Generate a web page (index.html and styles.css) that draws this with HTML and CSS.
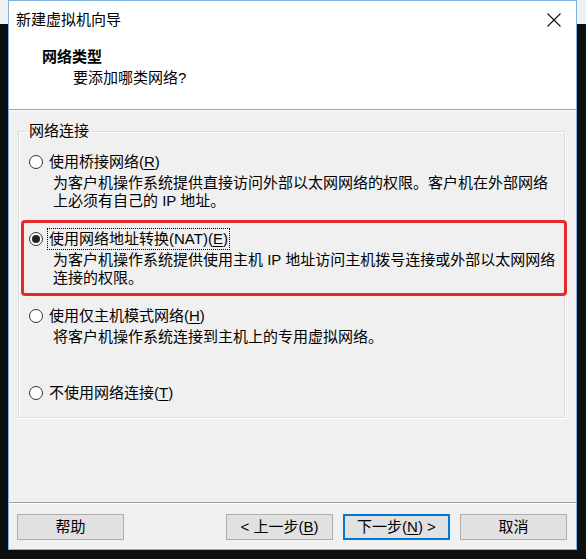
FILE: index.html
```html
<!DOCTYPE html>
<html lang="zh-CN">
<head>
<meta charset="utf-8">
<title>新建虚拟机向导</title>
<link rel="stylesheet" href="styles.css">
</head>
<body>
<div class="window">
  <div class="titlebar">
    <span class="title">新建虚拟机向导</span>
    <span class="close">
      <svg width="14" height="14" viewBox="0 0 14 14"><path d="M0.5 0.5 L13.5 13.5 M13.5 0.5 L0.5 13.5" stroke="#111" stroke-width="1.1" fill="none"/></svg>
    </span>
  </div>
  <div class="header">
    <div class="h-title">网络类型</div>
    <div class="h-sub">要添加哪类网络?</div>
  </div>
  <div class="content">
    <div class="group">
      <div class="legend">网络连接</div>
      <div class="option first">
        <div class="opt-line"><span class="radio"></span><span class="opt-label">使用桥接网络(<u>R</u>)</span></div>
        <div class="desc"><span class="dl">为客户机操作系统提供直接访问外部以太网网络的权限。客户机在外部网络</span><span class="dl">上必须有自己的 IP 地址。</span></div>
      </div>
      <div class="option">
        <div class="opt-line"><span class="radio checked"></span><span class="opt-label focus">使用网络地址转换(NAT)(<u>E</u>)</span></div>
        <div class="desc"><span class="dl">为客户机操作系统提供使用主机 IP 地址访问主机拨号连接或外部以太网网络</span><span class="dl">连接的权限。</span></div>
      </div>
      <div class="option">
        <div class="opt-line"><span class="radio"></span><span class="opt-label">使用仅主机模式网络(<u>H</u>)</span></div>
        <div class="desc"><span class="dl">将客户机操作系统连接到主机上的专用虚拟网络。</span></div>
      </div>
      <div class="option last">
        <div class="opt-line"><span class="radio"></span><span class="opt-label">不使用网络连接(<u>T</u>)</span></div>
      </div>
    </div>
  </div>
  <div class="footer">
    <button class="btn">帮助</button>
    <div class="spacer"></div>
    <button class="btn">&lt; 上一步(<u>B</u>)</button>
    <button class="btn default">下一步(<u>N</u>) &gt;</button>
    <button class="btn">取消</button>
  </div>
  <div class="highlight"></div>
</div>
</body>
</html>
```
FILE: styles.css
```css
* { box-sizing: border-box; }
html, body { margin: 0; padding: 0; }
body {
  width: 586px;
  height: 559px;
  overflow: hidden;
  background: linear-gradient(to bottom, #eef0f2 0, #eef0f2 24px, #0e0e0e 24px, #0e0e0e 100%);
  font-family: "Liberation Sans", "Noto Sans CJK SC", sans-serif;
  font-size: 15px;
  color: #000;
}
.window {
  position: relative;
  margin-left: 8px;
  width: 569px;
  height: 550px;
  border: 1px solid #7fb2de;
  background: #f0f0f0;
  display: flex;
  flex-direction: column;
}
.titlebar {
  height: 37px;
  background: #fff;
  display: flex;
  align-items: center;
  justify-content: space-between;
  padding: 0 10px 0 7px;
}
.title { line-height: 37px; }
.close { display: flex; align-items: center; width: 14px; height: 14px; margin-right: 5px; }
.header {
  height: 72px;
  background: #fff;
  border-bottom: 1px solid #a0a0a0;
  padding: 10px 0 0 33px;
}
.h-title { font-weight: bold; line-height: 18px; }
.h-sub { line-height: 18px; margin-top: 3px; padding-left: 31px; }
.content {
  flex: 1;
  border-top: 1px solid #fff;
  padding: 20px 11px 0 9px;
}
.group {
  border: 1px solid #dcdcdc;
  box-shadow: inset 1px 1px 0 #fff, 1px 1px 0 #fff;
  height: 287px;
  padding: 0 10px;
}
.legend {
  margin-top: -10px;
  margin-left: -2px;
  width: fit-content;
  padding: 0 2px;
  background: #f0f0f0;
  line-height: 18px;
}
.option { margin-top: 20px; }
.option.first { margin-top: 13px; }
.option.last { margin-top: 38px; }
.opt-line { display: flex; align-items: center; height: 18px; }
.radio {
  width: 14px;
  height: 14px;
  border: 1px solid #333;
  border-radius: 50%;
  background: #fff;
  margin-right: 5px;
  display: flex;
  align-items: center;
  justify-content: center;
  flex: none;
}
.radio.checked::after {
  content: "";
  width: 8px;
  height: 8px;
  border-radius: 50%;
  background: #222;
}
.opt-label { line-height: 18px; padding: 1px 1px; }
.opt-label.focus { outline: 1px dotted #000; outline-offset: 0; }
.desc { padding-left: 24px; margin-top: 3px; }
.dl { display: block; line-height: 18px; height: 18px; white-space: nowrap; }
u { text-decoration: underline; text-underline-offset: 2px; }
.footer {
  height: 47px;
  border-top: 1px solid #a0a0a0;
  box-shadow: inset 0 1px 0 #fff;
  display: flex;
  align-items: flex-start;
  padding: 11px 9px 0 8px;
  gap: 10px;
}
.spacer { flex: 1; }
.btn {
  width: 107px;
  height: 26px;
  background: #e1e1e1;
  border: 1px solid #adadad;
  font-family: inherit;
  font-size: 15px;
  color: #000;
  padding: 0;
  line-height: 22px;
}
.btn.default { border: 2px solid #0078d7; }
.highlight {
  position: absolute;
  left: 12px;
  top: 219px;
  width: 546px;
  height: 76px;
  border: 3px solid #e62a2a;
  border-radius: 4px;
  pointer-events: none;
}
```
